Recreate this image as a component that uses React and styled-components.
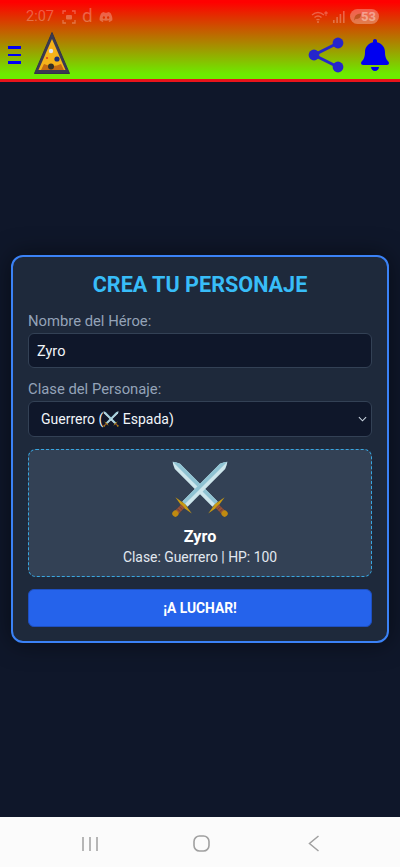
import React from "react";
import styled, { createGlobalStyle } from "styled-components";
import { FaBell, FaDiscord } from "react-icons/fa";

const Global = createGlobalStyle`
  html, body { margin: 0; padding: 0; background: #0f172a; }
  * { box-sizing: border-box; }
  body { font-family: Roboto, "Liberation Sans", sans-serif; }
`;

const Screen = styled.div`
  width: 400px;
  height: 867px;
  display: flex;
  flex-direction: column;
  overflow: hidden;
  background: #0f172a;
`;

const Header = styled.header`
  height: 82px;
  flex: none;
  display: flex;
  flex-direction: column;
  background: linear-gradient(180deg, #ff0000 3%, #6cec00 94%);
  border-bottom: 3px solid #e8141c;
`;

const StatusBar = styled.div`
  height: 31px;
  flex: none;
  display: flex;
  align-items: center;
  justify-content: space-between;
  padding: 2px 21px 0 26px;
  color: rgba(255, 255, 255, 0.28);
`;

const StatusGroup = styled.div`
  display: flex;
  align-items: center;
  gap: ${(p) => p.$gap || 5}px;
`;

const Time = styled.span`
  font-size: 14.5px;
  margin-right: 2px;
`;

const AppLetter = styled.span`
  font-size: 19px;
  font-weight: 400;
  line-height: 1;
  margin-top: -2px;
`;

const Battery = styled.span`
  height: 15px;
  width: 29px;
  border-radius: 8px;
  background: rgba(255, 255, 255, 0.3);
  color: rgba(255, 255, 255, 0.4);
  font-size: 13px;
  font-weight: 700;
  line-height: 15px;
  display: flex;
  align-items: center;
  justify-content: space-between;
  padding: 0 3px 0 4px;
  margin-left: 3px;
`;

const Toolbar = styled.div`
  flex: 1;
  display: flex;
  align-items: center;
  justify-content: space-between;
  padding: 0 9px 0 8px;
`;

const ToolGroup = styled.div`
  display: flex;
  align-items: center;
  gap: ${(p) => p.$gap}px;
`;

const Burger = styled.div`
  width: 13px;
  display: flex;
  flex-direction: column;
  gap: 5px;
  & > span { height: 2.5px; background: #0000f5; display: block; }
`;

const LogoMark = styled.svg`
  margin-top: -5px;
  display: block;
`;

const Main = styled.main`
  flex: 1;
  display: flex;
  align-items: center;
  padding: 0 11px 1px;
`;

const Card = styled.section`
  width: 100%;
  height: 388px;
  background: #1e293b;
  border: 2px solid #3b82f6;
  border-radius: 12px;
  padding: 15px 15px 14px;
  box-shadow: 0 0 25px rgba(0, 0, 0, 0.5);
  display: flex;
  flex-direction: column;
`;

const Title = styled.h1`
  margin: 0 0 15px;
  text-align: center;
  color: #38bdf8;
  font-size: 21.6px;
  line-height: 26px;
  font-weight: 700;
`;

const Label = styled.div`
  color: #94a3b8;
  font-size: 14.8px;
  line-height: 17px;
  margin-bottom: 3px;
`;

const Field = styled.div`
  background: #0f172a;
  border: 1px solid #334155;
  border-radius: 6px;
  color: #f1f5f9;
  font-size: ${(p) => p.$size}px;
  height: ${(p) => p.$h}px;
  margin-bottom: ${(p) => p.$gap}px;
  padding: ${(p) => p.$padT}px ${(p) => p.$padR}px 0 ${(p) => p.$padL}px;
  display: flex;
  align-items: center;
  justify-content: space-between;
`;

const OptionText = styled.span`
  display: inline-flex;
  align-items: center;
  white-space: pre;
`;

const Preview = styled.div`
  height: 128px;
  background: #334155;
  border: 1px dashed #38a6e0;
  border-radius: 8px;
  margin-bottom: 12px;
  display: flex;
  flex-direction: column;
  align-items: center;
  padding-top: 10px;
`;

const HeroName = styled.div`
  color: #fff;
  font-size: 16.2px;
  font-weight: 700;
  line-height: 19px;
  margin-top: 9px;
`;

const HeroStats = styled.div`
  color: #e2e8f0;
  font-size: 13.9px;
  line-height: 16px;
  margin-top: 3px;
`;

const Fight = styled.button`
  height: 38px;
  border: 1px solid #1e4fc0;
  border-radius: 6px;
  background: #2563eb;
  color: #fff;
  font-family: inherit;
  font-size: 13.8px;
  font-weight: 700;
`;

const NavBar = styled.nav`
  height: 50px;
  flex: none;
  background: #fbfbfb;
  display: grid;
  grid-template-columns: 111px 115px auto;
  align-items: center;
  padding: 3px 0 0 82px;
  color: #a0a0a0;
  & > svg { display: block; }
`;

const Swords = ({ size }) => {
  const sword = (
    <g transform="rotate(-45 30 30)">
      <path d="M26.2 52 L26.2 -3 Q27.5 -7 30 -10 Q32.5 -7 33.8 -3 L33.8 52 Z" fill="#cde6ec" />
      <path d="M30 -10 Q32.5 -7 33.8 -3 L33.8 52 L30 52 Z" fill="#8fc3d3" />
      <path d="M18 54 L30 52 L42 54 L30 56 Z" fill="#c99a12" />
      <rect x="27.6" y="55" width="4.8" height="9" fill="#96533a" />
      <path d="M27.6 58h4.8M27.6 61h4.8" stroke="#6b3a2a" strokeWidth="0.8" />
      <circle cx="30" cy="66" r="3.2" fill="#c08a10" />
    </g>
  );
  return (
    <svg width={size} height={size} viewBox="0 0 60 60" style={{ flex: "none" }}>
      {sword}
      <g transform="matrix(-1 0 0 1 60 0)">{sword}</g>
    </svg>
  );
};

const Logo = () => (
  <LogoMark width="38" height="44" viewBox="0 0 38 44">
    <path d="M19 1.5 L36.5 42.5 L1.5 42.5 Z" fill="#3a3a52" stroke="#33334a" strokeWidth="1" strokeLinejoin="round" />
    <path d="M19 8 L32.5 39 L5.5 39 Z" fill="#f5b21a" />
    <path d="M8 39 L11 33 Q20 37 28 33 L31 39 Z" fill="#c56a12" />
    <circle cx="18" cy="20" r="2.2" fill="#dfe4ee" />
    <circle cx="24" cy="28" r="2.6" fill="#1c2f78" />
    <circle cx="14" cy="27" r="1.1" fill="#d8431c" />
    <circle cx="18" cy="35.5" r="3" fill="#333028" />
  </LogoMark>
);

const ShareIcon = () => (
  <svg width="36" height="36" viewBox="0 0 36 36">
    <path d="M30 6 L6 18 L30 30" fill="none" stroke="#2626cc" strokeWidth="3" />
    <circle cx="30" cy="6" r="5.4" fill="#2626cc" />
    <circle cx="6" cy="18" r="5.4" fill="#2626cc" />
    <circle cx="30" cy="30" r="5.4" fill="#2626cc" />
  </svg>
);

const ScreenshotIcon = () => (
  <svg width="14" height="14" viewBox="0 0 14 14" fill="none" stroke="currentColor" strokeWidth="1.3">
    <path d="M1 4V1h3M10 1h3v3M13 10v3h-3M4 13H1v-3" />
    <rect x="4" y="5" width="6" height="4.5" rx="1" fill="currentColor" stroke="none" />
  </svg>
);

const WifiIcon = () => (
  <svg width="20" height="14" viewBox="0 0 20 14" fill="none" stroke="currentColor" strokeWidth="1.4">
    <path d="M1 5 Q7 0 13 5M3.5 7.5 Q7 4.5 10.5 7.5M5.5 10 Q7 8.8 8.5 10" />
    <circle cx="7" cy="12" r="1" fill="currentColor" stroke="none" />
    <path d="M15 1v5M13 3h4" strokeWidth="1" />
  </svg>
);

const SignalIcon = () => (
  <svg width="12" height="12" viewBox="0 0 12 12" fill="currentColor">
    <rect x="0" y="9" width="1.6" height="3" />
    <rect x="3.3" y="6" width="1.6" height="6" />
    <rect x="6.6" y="3" width="1.6" height="9" />
    <rect x="10" y="0" width="1.6" height="12" />
  </svg>
);

const LeafIcon = () => (
  <svg width="8" height="8" viewBox="0 0 8 8" fill="rgba(160,60,0,0.55)">
    <path d="M0 8 Q0 0 8 0 Q8 7 2 6 Z" />
  </svg>
);

const Chevron = () => (
  <svg width="9" height="6" viewBox="0 0 10 6" fill="none" stroke="#cbd5e1" strokeWidth="1.2">
    <path d="M1 1 L5 5 L9 1" />
  </svg>
);

const RecentsIcon = () => (
  <svg width="16" height="16" viewBox="0 0 16 16" stroke="currentColor" strokeWidth="1.5">
    <path d="M1 1v14M8 1v14M15 1v14" />
  </svg>
);

const HomeIcon = () => (
  <svg width="17" height="17" viewBox="0 0 17 17" fill="none" stroke="currentColor" strokeWidth="1.6">
    <rect x="1" y="1" width="15" height="15" rx="5.5" />
  </svg>
);

const BackIcon = () => (
  <svg width="11" height="17" viewBox="0 0 11 17" fill="none" stroke="currentColor" strokeWidth="1.5">
    <path d="M10.5 1 L1.5 8.5 L10.5 16" />
  </svg>
);

export default function App() {
  return (
    <Screen>
      <Global />
      <Header>
        <StatusBar>
          <StatusGroup $gap={6}>
            <Time>2:07</Time>
            <ScreenshotIcon />
            <AppLetter>d</AppLetter>
            <FaDiscord size={14} />
          </StatusGroup>
          <StatusGroup $gap={2}>
            <WifiIcon />
            <SignalIcon />
            <Battery><LeafIcon />53</Battery>
          </StatusGroup>
        </StatusBar>
        <Toolbar>
          <ToolGroup $gap={12}>
            <Burger><span /><span /><span /></Burger>
            <Logo />
          </ToolGroup>
          <ToolGroup $gap={15}>
            <ShareIcon />
            <FaBell size={32} color="#0000f0" />
          </ToolGroup>
        </Toolbar>
      </Header>
      <Main>
        <Card>
          <Title>CREA TU PERSONAJE</Title>
          <Label>Nombre del Héroe:</Label>
          <Field $h={35} $padT={2} $padL={8} $padR={8} $size={14.5} $gap={13}>Zyro</Field>
          <Label>Clase del Personaje:</Label>
          <Field $h={36} $padT={0} $padL={12} $padR={4} $size={14} $gap={12}>
            <OptionText>Guerrero (<Swords size={16} /> Espada)</OptionText>
            <Chevron />
          </Field>
          <Preview>
            <Swords size={58} />
            <HeroName>Zyro</HeroName>
            <HeroStats>Clase: Guerrero | HP: 100</HeroStats>
          </Preview>
          <Fight>¡A LUCHAR!</Fight>
        </Card>
      </Main>
      <NavBar>
        <RecentsIcon />
        <HomeIcon />
        <BackIcon />
      </NavBar>
    </Screen>
  );
}
